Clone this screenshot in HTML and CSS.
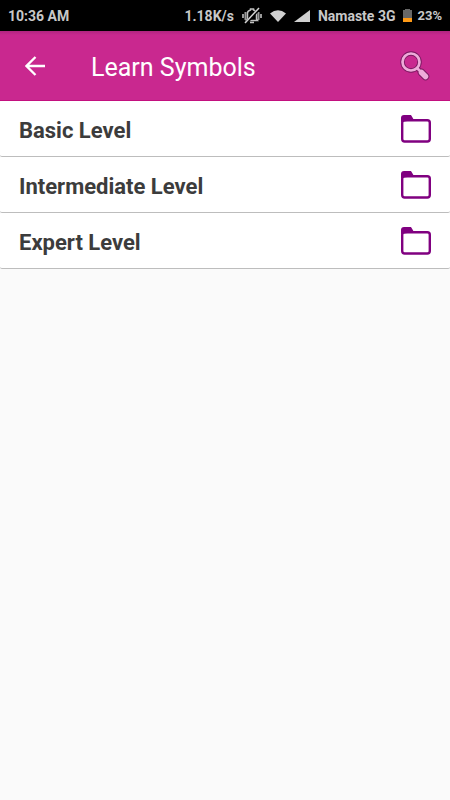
FILE: index.html
```
<!DOCTYPE html>
<html lang="en">
<head>
<meta charset="utf-8">
<meta name="viewport" content="width=device-width, initial-scale=1">
<title>Learn Symbols</title>
<link rel="stylesheet" href="styles.css">
</head>
<body>
<div class="status">
  <span class="clock">10:36 AM</span>
  <span>1.18K/s</span>
  <svg width="20" height="18" viewBox="0 0 20 18" aria-hidden="true">
    <path d="M1 7v4M3.500 5v8M16.500 5v8M19 7v4" stroke="#999" stroke-width="2"/>
    <path d="M5.500 12V6q0-2 3-3V2h3v1q3 1 3 3v6l1 1.500h-11zM8 15.500h4" fill="none" stroke="#c0c0c0" stroke-width="1.500"/>
    <path d="M4 16L17 2" stroke="#000" stroke-width="3"/>
    <path d="M3 16L17 1" stroke="#d0d0d0" stroke-width="1.500"/>
  </svg>
  <svg width="16" height="12" viewBox="0 0 16 12" aria-hidden="true"><path d="M0 3.500Q8-3 16 3.500L8 12z" fill="#d0d0d0"/></svg>
  <svg width="16" height="12" viewBox="0 0 16 12" aria-hidden="true"><path d="M16 0v12H0z" fill="#d0d0d0"/></svg>
  <span>Namaste 3G</span>
  <span class="battery">
    <svg width="9" height="13" viewBox="0 0 9 13" aria-hidden="true"><path d="M0 1h2V0h5v1h2v8H0z" fill="#686868"/><path d="M0 9h9v4H0z" fill="#ff9a16"/></svg>
    <span class="percent">23%</span>
  </span>
</div>
<header class="bar">
  <button class="icon-button" aria-label="Back">
    <svg width="20" height="20" viewBox="0 0 20 20"><path d="M20 10H1.500M10.500 1L1.500 10l9 9" fill="none" stroke="#fff" stroke-width="2.300"/></svg>
  </button>
  <h1>Learn Symbols</h1>
  <button class="icon-button" aria-label="Search">
    <svg width="30" height="30" viewBox="0 0 30 30">
      <path d="M17.500 17.500l3 3" stroke="#8a1a68" stroke-width="5"/>
      <path d="M21.500 21.500l4 4" stroke="#7a1860" stroke-width="7.500" stroke-linecap="round"/>
      <circle cx="11" cy="11" r="8.500" fill="none" stroke="#7a1860" stroke-width="4.500"/>
      <path d="M17 17l4 4" stroke="#eeaad9" stroke-width="2.500"/>
      <path d="M21.500 21.500l4 4" stroke="#eeaad9" stroke-width="5.500" stroke-linecap="round"/>
      <circle cx="11" cy="11" r="8.500" fill="none" stroke="#eeaad9" stroke-width="2.700"/>
    </svg>
  </button>
</header>
<main>
  <ul class="levels">
    <li><a href="#basic"><span>Basic Level</span>
      <svg width="30" height="28" viewBox="0 0 30 28" aria-hidden="true"><path d="M0 7V3q0-3 3-3h7l3 5z" fill="#800080"/><rect x="1.200" y="5.200" width="27.600" height="21.300" rx="2.500" fill="none" stroke="#800080" stroke-width="2.400"/></svg></a></li>
    <li><a href="#intermediate"><span>Intermediate Level</span>
      <svg width="30" height="28" viewBox="0 0 30 28" aria-hidden="true"><path d="M0 7V3q0-3 3-3h7l3 5z" fill="#800080"/><rect x="1.200" y="5.200" width="27.600" height="21.300" rx="2.500" fill="none" stroke="#800080" stroke-width="2.400"/></svg></a></li>
    <li><a href="#expert"><span>Expert Level</span>
      <svg width="30" height="28" viewBox="0 0 30 28" aria-hidden="true"><path d="M0 7V3q0-3 3-3h7l3 5z" fill="#800080"/><rect x="1.200" y="5.200" width="27.600" height="21.300" rx="2.500" fill="none" stroke="#800080" stroke-width="2.400"/></svg></a></li>
  </ul>
</main>
</body>
</html>
```
FILE: styles.css
```
* {
  box-sizing: border-box;
}

body {
  margin: 0;
  background: #fafafa;
  font-family: Roboto, "Liberation Sans", sans-serif;
}

svg {
  display: block;
  flex: none;
}

.status {
  display: flex;
  align-items: center;
  gap: 8px;
  height: 31px;
  padding: 0 8px;
  background: #000;
  color: #c8c8c8;
  font-size: 14px;
  font-weight: 700;
  white-space: nowrap;
}

.clock {
  margin-right: auto;
}

.battery {
  display: flex;
  align-items: center;
  gap: 5px;
}

.percent {
  font-size: 13px;
}

.bar {
  display: flex;
  align-items: center;
  height: 70px;
  padding: 0 20px 0 25px;
  background: linear-gradient(#b02480, #c9288f 4px);
  border-bottom: 1px solid #c3107f;
}

.bar h1 {
  flex: 1;
  margin: 0 0 0 46px;
  padding-top: 4px;
  color: #fff;
  font-size: 25px;
  font-weight: 400;
  line-height: 32px;
}

.icon-button {
  padding: 0;
  border: 0;
  background: none;
}

.levels {
  margin: 0;
  padding: 0;
  list-style: none;
}

.levels a {
  display: flex;
  align-items: center;
  justify-content: space-between;
  height: 56px;
  padding: 0 19px;
  border-bottom: 1px solid #bdbdbd;
  border-radius: 2px;
  background: #fff;
  color: #3c3c3c;
  font-size: 22px;
  font-weight: 700;
  text-decoration: none;
}

.levels span {
  padding-top: 4px;
}
```
